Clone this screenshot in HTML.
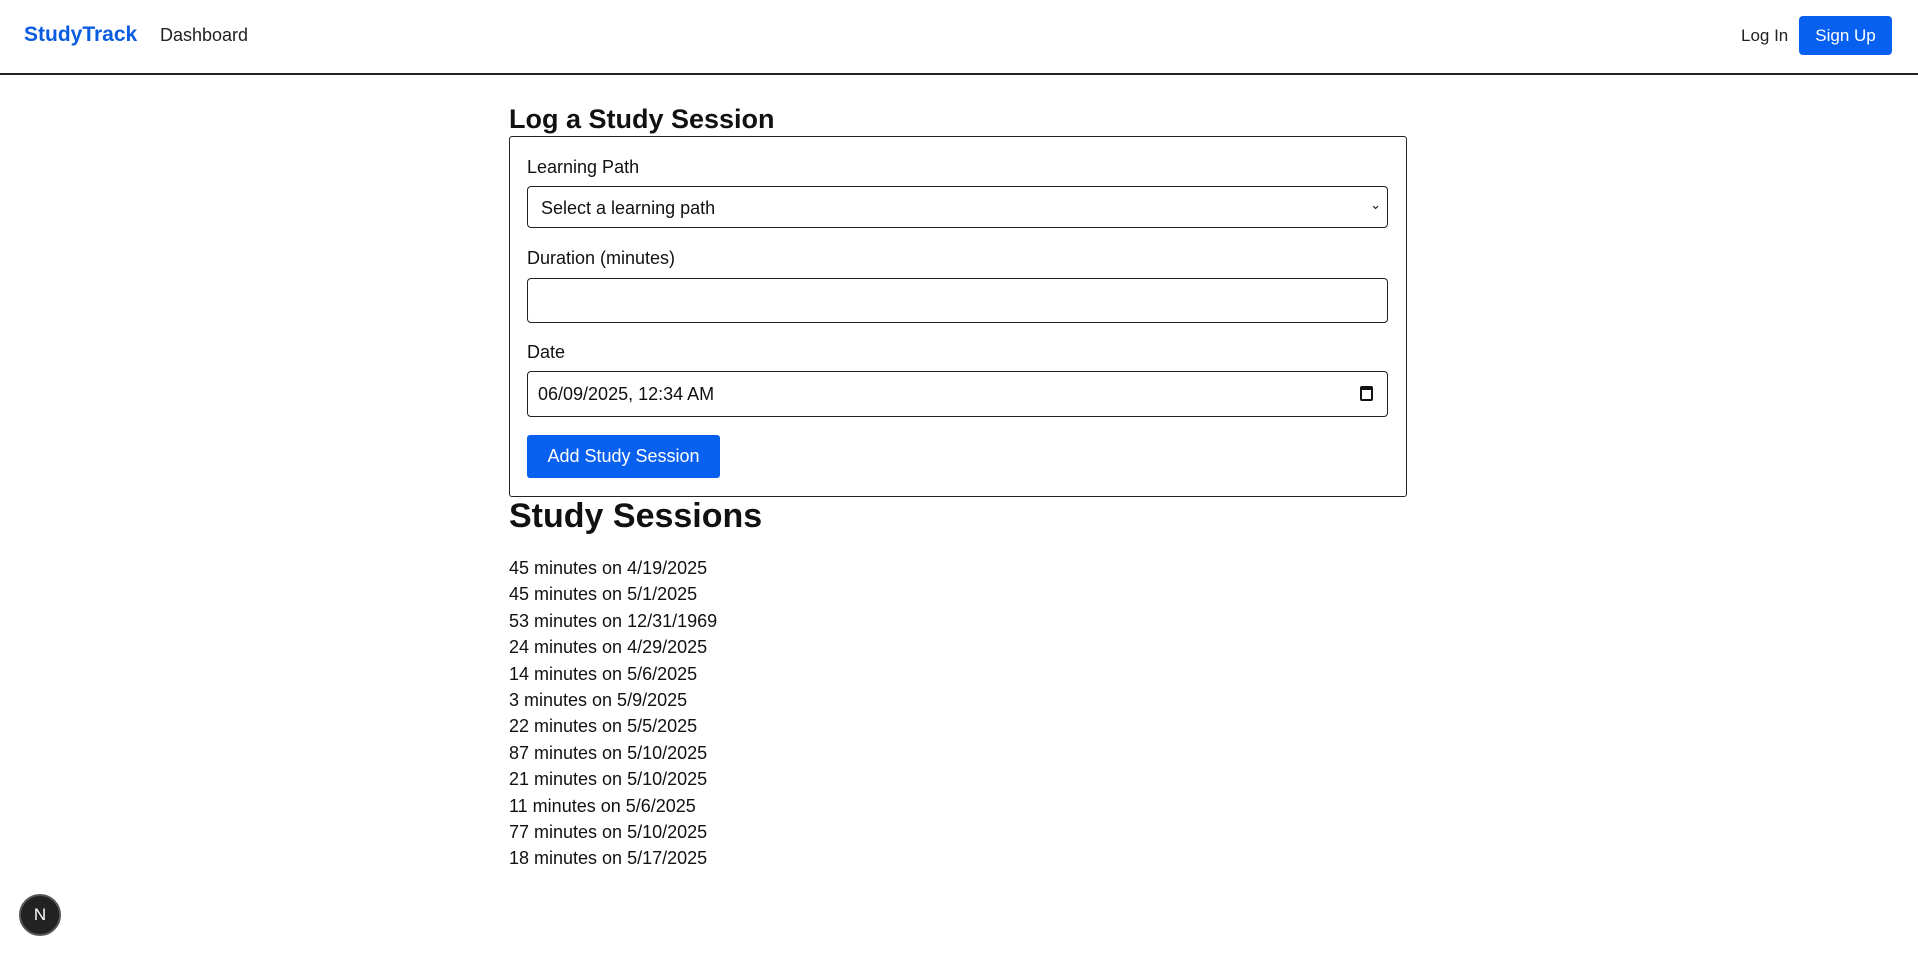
<!DOCTYPE html>
<html><head><meta charset="utf-8"><style>
*{box-sizing:border-box;margin:0;padding:0}
body{width:1918px;height:956px;background:#fff;font-family:"Liberation Sans",Arial,sans-serif;color:#111;position:relative;overflow:hidden}
.hdr{position:absolute;left:0;top:0;width:1918px;height:75px;border-bottom:2px solid #222}
.logo{position:absolute;left:24px;top:23px;font-size:21px;font-weight:bold;color:#0a5ce0}
.dash{position:absolute;left:160px;top:25px;font-size:18px;color:#222}
.login{position:absolute;left:1741px;top:26px;font-size:17px;color:#222}
.signup{position:absolute;left:1799px;top:16px;width:93px;height:39px;background:#0760f0;color:#fff;border-radius:4px;font-size:17px;text-align:center;line-height:39px}
h1{position:absolute;left:509px;top:104px;font-size:27px;font-weight:bold}
.box{position:absolute;left:509px;top:136px;width:898px;height:361px;border:1.5px solid #222;border-radius:3px}
.lbl{position:absolute;left:527px;font-size:18px}
.in{position:absolute;left:527px;width:861px;border:1.5px solid #222;border-radius:4px;font-size:18px}
.btn{position:absolute;left:527px;top:435px;width:193px;height:43px;background:#0760f0;color:#fff;border-radius:3px;font-size:18px;text-align:center;line-height:43px}
h2{position:absolute;left:509px;top:497px;font-size:34px;font-weight:bold}
.list{position:absolute;left:509px;top:555px;font-size:18px;line-height:26.4px}
.n{position:absolute;left:19px;top:894px;width:42px;height:42px;border-radius:50%;background:#222;border:2px solid #555;color:#fff;font-size:17px;text-align:center;line-height:38px}
</style></head><body>
<div class="hdr">
<div class="logo">StudyTrack</div><div class="dash">Dashboard</div>
<div class="login">Log In</div><div class="signup">Sign Up</div>
</div>
<h1>Log a Study Session</h1>
<div class="box"></div>
<div class="lbl" style="top:157px">Learning Path</div>
<div class="in" style="top:186px;height:42px;padding:11px 0 0 13px">Select a learning path<span style="position:absolute;right:6px;top:10px;font-size:13px">&#8964;</span></div>
<div class="lbl" style="top:248px">Duration (minutes)</div>
<div class="in" style="top:278px;height:45px"></div>
<div class="lbl" style="top:342px">Date</div>
<div class="in" style="top:371px;height:46px;padding:12px 0 0 10px">06/09/2025, 12:34 AM<span style="position:absolute;right:14px;top:14px;width:13px;height:15px;border:2px solid #111;border-top-width:4px;border-radius:2px"></span></div>
<div class="btn">Add Study Session</div>
<h2>Study Sessions</h2>
<div class="list">
45 minutes on 4/19/2025<br>45 minutes on 5/1/2025<br>53 minutes on 12/31/1969<br>24 minutes on 4/29/2025<br>14 minutes on 5/6/2025<br>3 minutes on 5/9/2025<br>22 minutes on 5/5/2025<br>87 minutes on 5/10/2025<br>21 minutes on 5/10/2025<br>11 minutes on 5/6/2025<br>77 minutes on 5/10/2025<br>18 minutes on 5/17/2025
</div>
<div class="n">N</div>
</body></html>
